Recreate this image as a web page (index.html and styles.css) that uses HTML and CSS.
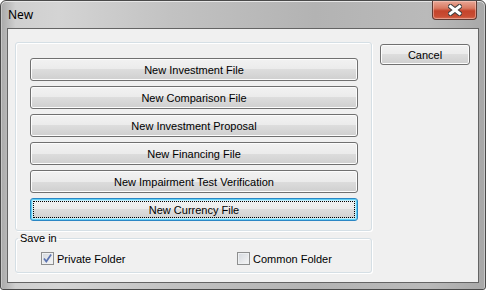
FILE: index.html
```
<!DOCTYPE html>
<html lang="en">
    <head>
        <meta charset="utf-8">
        <title>New</title>
        <link rel="stylesheet" href="styles.css">
    </head>
    <body>
        <div class="window">
            <div class="titlebar">
                <span class="title">New</span>
                <button class="close" aria-label="Close">
                    <svg width="14" height="12" viewBox="0 0 14 12">
                        <path d="M2.5 2.5l9 7M11.5 2.5l-9 7" fill="none" stroke="#3e3e3e" stroke-width="5" stroke-linecap="square"/>
                        <path d="M2.5 2.5l9 7M11.5 2.5l-9 7" fill="none" stroke="#fff" stroke-width="3" stroke-linecap="square"/>
                    </svg>
                </button>
            </div>

            <div class="client">
                <div class="left">
                    <div class="group actions">
                        <button class="btn">New Investment File</button>
                        <button class="btn">New Comparison File</button>
                        <button class="btn">New Investment Proposal</button>
                        <button class="btn">New Financing File</button>
                        <button class="btn">New Impairment Test Verification</button>
                        <button class="btn focused">New Currency File</button>
                    </div>

                    <fieldset class="group save">
                        <legend>Save in</legend>
                        <div class="checks">
                            <label class="check">
                                <span class="box">
                                    <svg width="11" height="11" viewBox="0 0 11 11">
                                        <path d="M2 5.5l2.3 3 4.8-7" fill="none" stroke="#5b73b0" stroke-width="1.7"/>
                                    </svg>
                                </span>
                                Private Folder
                            </label>
                            <label class="check">
                                <span class="box"></span>
                                Common Folder
                            </label>
                        </div>
                    </fieldset>
                </div>

                <div class="side">
                    <button class="btn cancel">Cancel</button>
                </div>
            </div>
        </div>
    </body>
</html>
```

FILE: styles.css
```
html, body {
    margin: 0;
    padding: 0;
    background: #fff;
}

.window {
    box-sizing: border-box;
    width: 486px;
    height: 290px;
    border: 1px solid #4a4a4a;
    border-radius: 6px 6px 3px 3px;
    background: linear-gradient(to right, #a9a9a9 0, #cfcfcf 3%, #d4d4d4 12%, #c2c2c2 35%, #b3b3b3 65%, #bababa 88%, #a8a8a8 100%);
    box-shadow: inset 0 1px 0 #e6e6e6, inset 1px 0 0 #c8c8c8, inset -1px 0 0 #c8c8c8;
    font-family: "Liberation Sans", Arial, sans-serif;
    font-size: 11px;
    color: #000;
}

.titlebar {
    display: flex;
    justify-content: space-between;
    align-items: flex-start;
    height: 27px;
    padding-left: 7px;
}

.title {
    font-family: "Noto Sans", "Open Sans", sans-serif;
    font-size: 12px;
    line-height: 16px;
    margin-top: 6px;
}

.close {
    box-sizing: border-box;
    width: 45px;
    height: 19px;
    margin-right: 8px;
    padding: 0;
    display: flex;
    align-items: center;
    justify-content: center;
    border: 1px solid #5e3a33;
    border-top: 0;
    border-radius: 0 0 4px 4px;
    background: linear-gradient(#e8a796 0, #d87a62 40%, #c4442b 55%, #c94d33 85%, #d56c52 100%);
    box-shadow: inset 0 0 0 1px rgba(255, 220, 210, 0.45);
}

.client {
    box-sizing: border-box;
    width: 472px;
    height: 255px;
    margin-left: 6px;
    border: 1px solid #646464;
    background: #f0f0f0;
    display: grid;
    grid-template-columns: 357px 90px;
    column-gap: 8px;
    align-items: start;
    padding: 13px 8px 0 7px;
}

.left {
    display: flex;
    flex-direction: column;
    gap: 1px;
}

.group {
    margin: 0;
    border: 1px solid #d5dfe5;
    border-radius: 3px;
    box-shadow: inset 1px 1px 0 #fff, 1px 1px 0 #fff;
}

.actions {
    display: flex;
    flex-direction: column;
    gap: 5px;
    padding: 15px 13px 9px 14px;
}

.btn {
    box-sizing: border-box;
    height: 23px;
    padding: 0;
    border: 1px solid #707070;
    border-radius: 3px;
    background: linear-gradient(#f2f2f2 0, #ebebeb 50%, #dddddd 50%, #cfcfcf 100%);
    box-shadow: inset 0 0 0 1px #fcfcfc;
    font-family: "Liberation Sans", Arial, sans-serif;
    font-size: 11px;
    color: #000;
}

.btn.focused {
    border-color: #2b86c4;
    box-shadow: inset 0 0 0 1px #5fd0f4, inset 0 0 0 2px #c4eefb;
    outline: 1px dotted #000;
    outline-offset: -4px;
}

.cancel {
    width: 90px;
    height: 21px;
    margin-top: 2px;
}

.save {
    padding: 0;
    min-width: 0;
}

.save legend {
    margin-left: 2px;
    padding: 0 2px;
    line-height: 13px;
}

.checks {
    display: grid;
    grid-template-columns: 196px auto;
    padding: 6px 0 6px 25px;
}

.check {
    display: flex;
    align-items: center;
    gap: 3px;
    height: 15px;
}

.box {
    box-sizing: border-box;
    width: 13px;
    height: 13px;
    display: flex;
    align-items: center;
    justify-content: center;
    border: 1px solid #8e8f8f;
    background: linear-gradient(135deg, #d4d8de 0, #f6f6f6 100%);
    box-shadow: inset 0 0 0 1px #eef0f2;
}
```
